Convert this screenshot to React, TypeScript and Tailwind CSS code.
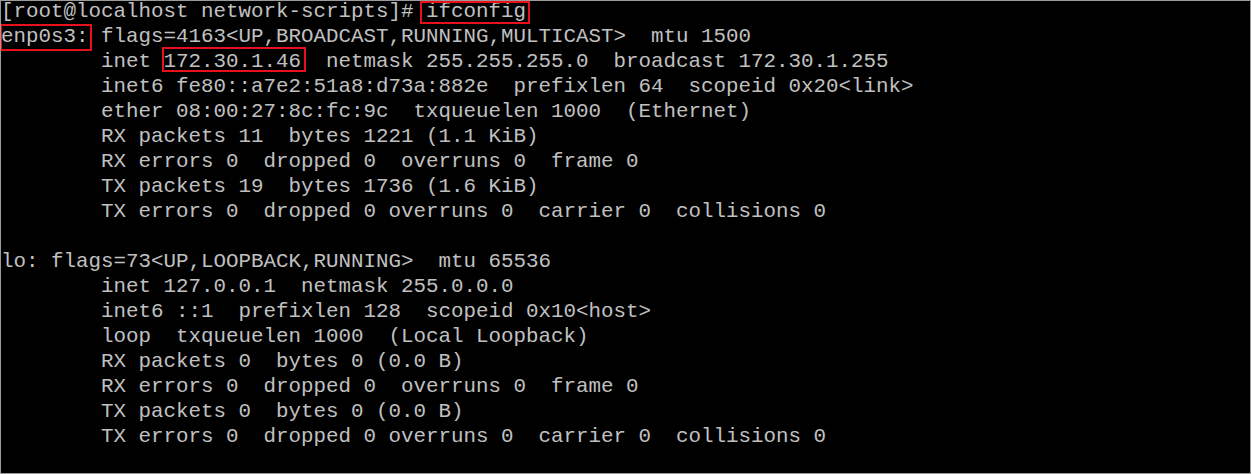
import React from "react";

const Box = ({ children, cls }: { children: React.ReactNode; cls: string }) => (
  <span className="relative">
    <span className={`pointer-events-none absolute border-2 border-[#e8101a] ${cls}`} />
    {children}
  </span>
);

export default function App() {
  return (
    <div className="w-[1251px] h-[474px] overflow-hidden bg-black border border-[#9a9a9a]">
      <pre
        className="m-0 mt-[-2px] whitespace-pre text-[20.833px] leading-[25px] text-[#c0c0c0]"
        style={{ fontFamily: '"Liberation Mono", monospace' }}
      >
        {"[root@localhost network-scripts]# "}
        <Box cls="left-[-6px] right-[-4px] top-[1px] bottom-[-1px]">ifconfig</Box>
        {"\n"}
        <Box cls="left-[-1px] right-[-3px] top-[-1px] bottom-[-3px]">enp0s3:</Box>
        {" flags=4163<UP,BROADCAST,RUNNING,MULTICAST>  mtu 1500\n"}
        {"        inet "}
        <Box cls="left-[-2px] right-[-5px] top-[-3px] bottom-[1px]">172.30.1.46</Box>
        {"  netmask 255.255.255.0  broadcast 172.30.1.255\n"}
        {"        inet6 fe80::a7e2:51a8:d73a:882e  prefixlen 64  scopeid 0x20<link>\n"}
        {"        ether 08:00:27:8c:fc:9c  txqueuelen 1000  (Ethernet)\n"}
        {"        RX packets 11  bytes 1221 (1.1 KiB)\n"}
        {"        RX errors 0  dropped 0  overruns 0  frame 0\n"}
        {"        TX packets 19  bytes 1736 (1.6 KiB)\n"}
        {"        TX errors 0  dropped 0 overruns 0  carrier 0  collisions 0\n"}
        {"\n"}
        {"lo: flags=73<UP,LOOPBACK,RUNNING>  mtu 65536\n"}
        {"        inet 127.0.0.1  netmask 255.0.0.0\n"}
        {"        inet6 ::1  prefixlen 128  scopeid 0x10<host>\n"}
        {"        loop  txqueuelen 1000  (Local Loopback)\n"}
        {"        RX packets 0  bytes 0 (0.0 B)\n"}
        {"        RX errors 0  dropped 0  overruns 0  frame 0\n"}
        {"        TX packets 0  bytes 0 (0.0 B)\n"}
        {"        TX errors 0  dropped 0 overruns 0  carrier 0  collisions 0"}
      </pre>
    </div>
  );
}
